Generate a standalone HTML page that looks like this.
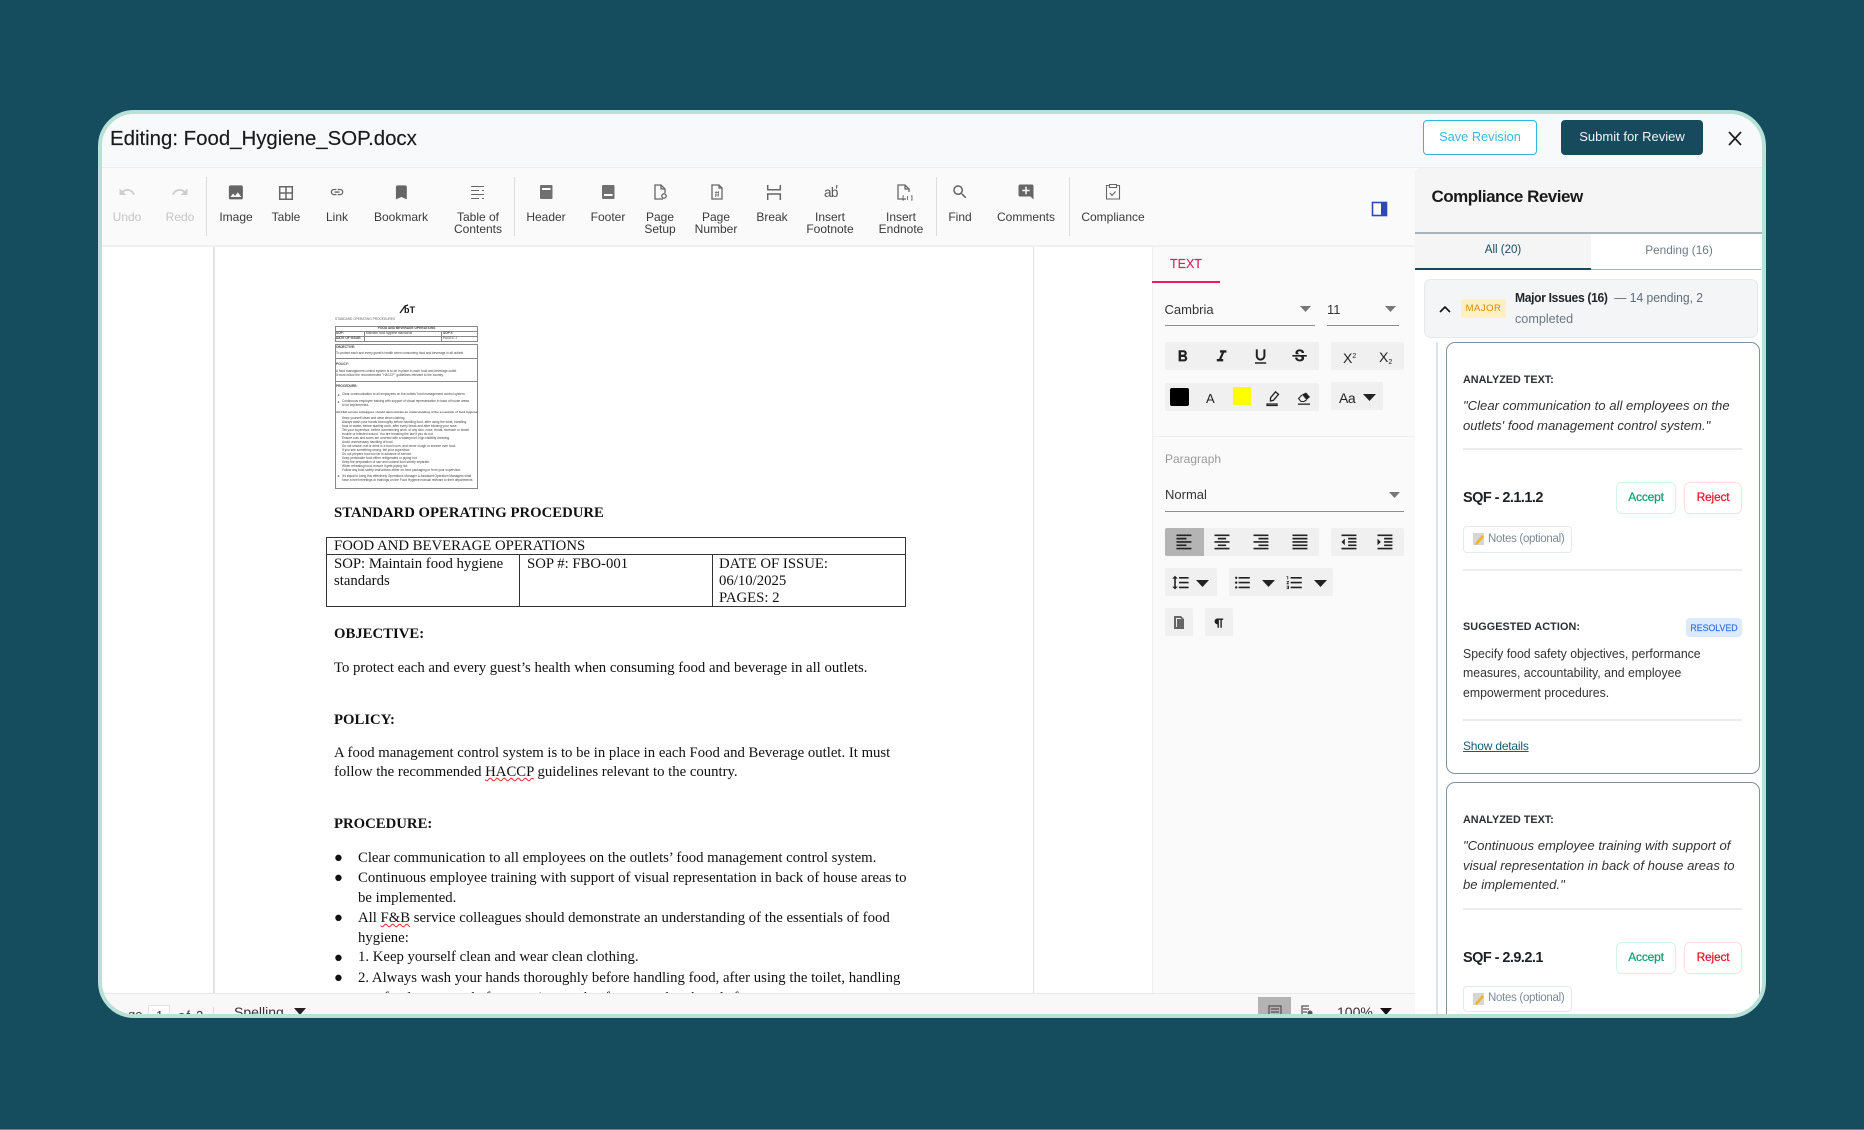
<!DOCTYPE html>
<html><head><meta charset="utf-8"><title>Editing</title>
<style>
html,body{margin:0;padding:0;width:1864px;height:1130px;overflow:hidden;background:#154d5f;font-family:"Liberation Sans",sans-serif}
#bot{position:absolute;left:0;top:1129px;width:1864px;height:1px;background:#5c8493}
#card{position:absolute;left:98px;top:110px;width:1668px;height:908px;box-sizing:border-box;border:4px solid #b7e0d6;border-radius:36px;overflow:hidden;background:#fff}
#w{position:absolute;left:-102px;top:-114px;width:1864px;height:1130px}
#w div{position:absolute}
.t{white-space:nowrap;line-height:20px;height:20px}
.c{transform:translateX(-50%);text-align:center}
.lb{font-size:12px;line-height:12px;color:#3a3a3a;text-align:center;white-space:nowrap;transform:translateX(-50%)}
.d{font-family:"Liberation Serif",serif;font-size:14.75px;color:#111;white-space:nowrap;line-height:20px;height:20px}
.b{font-weight:bold}
.s{background:#f0f0f0;border-radius:2px}
.n{transform:scaleX(.93);transform-origin:0 50%}
.it{font-style:italic;transform:scaleX(1.01);transform-origin:0 50%}
.m{font-size:13px;color:#333}
.ln{background:#ededed;height:2px}
.tt{font-size:3.2px;line-height:5px;height:5px;color:#444;white-space:nowrap;font-family:"Liberation Sans",sans-serif}
.bx{border:1px solid #888;box-sizing:border-box}
.wv{text-decoration:underline wavy #e2262c .8px;text-underline-offset:1px}
.ana{font-size:10.8px;font-weight:bold;color:#2a2f33}
.bt{font-size:12px;letter-spacing:-.2px;-webkit-text-stroke:.25px}
.sq{font-size:14.5px;font-weight:bold;color:#1c2024;letter-spacing:-.55px}
svg{position:absolute;left:0;top:0}
</style></head><body>
<div id="bot"></div>
<div id="card"><div id="w">

<!-- title bar -->
<div style="left:102px;top:114px;width:1660px;height:53px;background:#f8f9fa"></div>
<div style="left:102px;top:167px;width:1660px;height:1px;background:#eceef0"></div>
<div class="t" style="left:110px;top:129px;font-size:20.4px;color:#1a1a1a;-webkit-text-stroke:.15px #1a1a1a">Editing: Food_Hygiene_SOP.docx</div>
<div style="left:1423px;top:120px;width:114px;height:35px;box-sizing:border-box;border:1px solid #2fb6da;border-radius:4px;background:#fff"></div>
<div class="t c" style="left:1480px;top:127px;font-size:12.8px;color:#3cb8da">Save Revision</div>
<div style="left:1561px;top:120px;width:142px;height:35px;border-radius:4px;background:#174a5c"></div>
<div class="t c" style="left:1632px;top:127px;font-size:13px;color:#f0f4f5">Submit for Review</div>

<!-- toolbar -->
<div style="left:102px;top:168px;width:1313px;height:77px;background:#fafafa"></div>
<div style="left:102px;top:245px;width:1313px;height:2px;background:#f1f1f1"></div>
<div style="left:206px;top:177px;width:1px;height:59px;background:#dcdcdc"></div>
<div style="left:514px;top:177px;width:1px;height:59px;background:#dcdcdc"></div>
<div style="left:936px;top:177px;width:1px;height:59px;background:#dcdcdc"></div>
<div style="left:1069px;top:177px;width:1px;height:59px;background:#dcdcdc"></div>
<div class="lb" style="left:127px;top:211px;color:#c4c4c4">Undo</div>
<div class="lb" style="left:180px;top:211px;color:#c4c4c4">Redo</div>
<div class="lb" style="left:236px;top:211px">Image</div>
<div class="lb" style="left:286px;top:211px">Table</div>
<div class="lb" style="left:337px;top:211px">Link</div>
<div class="lb" style="left:401px;top:211px">Bookmark</div>
<div class="lb" style="left:478px;top:211px">Table of<br>Contents</div>
<div class="lb" style="left:546px;top:211px">Header</div>
<div class="lb" style="left:608px;top:211px">Footer</div>
<div class="lb" style="left:660px;top:211px">Page<br>Setup</div>
<div class="lb" style="left:716px;top:211px">Page<br>Number</div>
<div class="lb" style="left:772px;top:211px">Break</div>
<div class="lb" style="left:830px;top:211px">Insert<br>Footnote</div>
<div class="lb" style="left:901px;top:211px">Insert<br>Endnote</div>
<div class="lb" style="left:960px;top:211px">Find</div>
<div class="lb" style="left:1026px;top:211px">Comments</div>
<div class="lb" style="left:1113px;top:211px">Compliance</div>
<div class="t" style="left:824px;top:183px;font-size:13.5px;color:#555;letter-spacing:-.6px">ab</div>

<!-- document -->
<div style="left:213px;top:247px;width:2px;height:746px;background:#e2e2e2"></div>
<div style="left:1033px;top:247px;width:1px;height:746px;background:#e2e2e2"></div>

<!-- thumbnail -->
<div class="t b" style="left:404px;top:300px;font-size:9px;color:#111">bT</div>
<div class="tt" style="left:335px;top:317px;color:#666">STANDARD OPERATING PROCEDURES</div>
<div class="bx" style="left:335px;top:326px;width:143px;height:16px"></div>
<div style="left:335px;top:331px;width:143px;height:1px;background:#888"></div>
<div style="left:335px;top:336px;width:143px;height:1px;background:#888"></div>
<div style="left:364px;top:331px;width:1px;height:11px;background:#888"></div>
<div style="left:441px;top:331px;width:1px;height:11px;background:#888"></div>
<div class="tt" style="left:378px;top:326px;font-weight:bold">FOOD AND BEVERAGE OPERATIONS</div>
<div class="tt" style="left:336px;top:331px;font-weight:bold">SOP:</div>
<div class="tt" style="left:366px;top:331px">Maintain food hygiene standards</div>
<div class="tt" style="left:443px;top:331px;font-weight:bold">SOP #:</div>
<div class="tt" style="left:336px;top:336px;font-weight:bold">DATE OF ISSUE:</div>
<div class="tt" style="left:443px;top:336px">PAGES: 2</div>
<div class="bx" style="left:335px;top:344px;width:143px;height:15px"></div>
<div class="bx" style="left:335px;top:358px;width:143px;height:24px"></div>
<div class="bx" style="left:335px;top:381px;width:143px;height:108px"></div>
<div class="tt" style="left:336px;top:345px;font-weight:bold">OBJECTIVE:</div>
<div class="tt" style="left:336px;top:351px">To protect each and every guest's health when consuming food and beverage in all outlets</div>
<div class="tt" style="left:336px;top:362px;font-weight:bold">POLICY:</div>
<div class="tt" style="left:336px;top:369px">A food management control system is to be in place in each food and beverage outlet</div>
<div class="tt" style="left:336px;top:373px">It must follow the recommended "HACCP" guidelines relevant to the country.</div>
<div class="tt" style="left:336px;top:384px;font-weight:bold">PROCEDURE:</div>
<div class="tt" style="left:342px;top:392px">Clear communication to all employees on the outlets' food management control system.</div>
<div class="tt" style="left:342px;top:399px">Continuous employee training with support of visual representation in back of house areas</div>
<div class="tt" style="left:342px;top:403px">to be implemented.</div>
<div class="tt" style="left:336px;top:410px;font-size:3px;font-weight:bold;color:#555">All F&amp;B service colleagues should demonstrate an understanding of the essentials of food hygiene</div>
<div class="tt" style="left:342px;top:416px">Keep yourself clean and wear clean clothing.</div>
<div class="tt" style="left:342px;top:420px">Always wash your hands thoroughly before handling food, after using the toilet, handling</div>
<div class="tt" style="left:342px;top:424px">food or waste, before starting work, after every break and after blowing your nose.</div>
<div class="tt" style="left:342px;top:428px">Tell your supervisor, before commencing work, of any skin, nose, throat, stomach or bowel</div>
<div class="tt" style="left:342px;top:432px">trouble or infected wound. You are breaking the law if you do not.</div>
<div class="tt" style="left:342px;top:436px">Ensure cuts and sores are covered with a waterproof, high visibility dressing.</div>
<div class="tt" style="left:342px;top:440px">Avoid unnecessary handling of food.</div>
<div class="tt" style="left:342px;top:444px">Do not smoke, eat or drink in a food room, and never cough or sneeze over food.</div>
<div class="tt" style="left:342px;top:448px">If you see something wrong, tell your supervisor.</div>
<div class="tt" style="left:342px;top:452px">Do not prepare food too far in advance of service.</div>
<div class="tt" style="left:342px;top:456px">Keep perishable food either refrigerated or piping hot.</div>
<div class="tt" style="left:342px;top:460px">Keep the preparation of raw and cooked food strictly separate.</div>
<div class="tt" style="left:342px;top:464px">When reheating food, ensure it gets piping hot.</div>
<div class="tt" style="left:342px;top:468px">Follow any food safety instructions either on food packaging or from your supervisor.</div>
<div class="tt" style="left:342px;top:474px">It's equal to bring this effectively Operations Manager &amp; Assistant Operation Managers shall</div>
<div class="tt" style="left:342px;top:478px">have a brief meetings or trainings on the Food Hygiene manual relevant to their departments</div>

<div class="d b" style="left:334px;top:503px">STANDARD OPERATING PROCEDURE</div>
<div style="left:326px;top:537px;width:580px;height:70px;box-sizing:border-box;border:1px solid #333"></div>
<div style="left:326px;top:554px;width:580px;height:1px;background:#333"></div>
<div style="left:519px;top:554px;width:1px;height:52px;background:#333"></div>
<div style="left:712px;top:554px;width:1px;height:52px;background:#333"></div>
<div class="d" style="left:334px;top:536px">FOOD AND BEVERAGE OPERATIONS</div>
<div class="d" style="left:334px;top:554px">SOP: Maintain food hygiene</div>
<div class="d" style="left:334px;top:571px">standards</div>
<div class="d" style="left:527px;top:554px">SOP #: FBO-001</div>
<div class="d" style="left:719px;top:554px">DATE OF ISSUE:</div>
<div class="d" style="left:719px;top:571px">06/10/2025</div>
<div class="d" style="left:719px;top:588px">PAGES: 2</div>
<div class="d b" style="left:334px;top:624px">OBJECTIVE:</div>
<div class="d" style="left:334px;top:658px">To protect each and every guest’s health when consuming food and beverage in all outlets.</div>
<div class="d b" style="left:334px;top:710px">POLICY:</div>
<div class="d" style="left:334px;top:743px">A food management control system is to be in place in each Food and Beverage outlet. It must</div>
<div class="d" style="left:334px;top:762px">follow the recommended <span class="wv">HACCP</span> guidelines relevant to the country.</div>
<div class="d b" style="left:334px;top:814px">PROCEDURE:</div>
<div class="d" style="left:334px;top:848px">●</div>
<div class="d" style="left:358px;top:848px">Clear communication to all employees on the outlets’ food management control system.</div>
<div class="d" style="left:334px;top:868px">●</div>
<div class="d" style="left:358px;top:868px">Continuous employee training with support of visual representation in back of house areas to</div>
<div class="d" style="left:358px;top:888px">be implemented.</div>
<div class="d" style="left:334px;top:908px">●</div>
<div class="d" style="left:358px;top:908px">All <span class="wv">F&amp;B</span> service colleagues should demonstrate an understanding of the essentials of food</div>
<div class="d" style="left:358px;top:928px">hygiene:</div>
<div class="d" style="left:334px;top:948px">●</div>
<div class="d" style="left:358px;top:947px">1. Keep yourself clean and wear clean clothing.</div>
<div class="d" style="left:334px;top:968px">●</div>
<div class="d" style="left:358px;top:968px">2. Always wash your hands thoroughly before handling food, after using the toilet, handling</div>
<div class="d" style="left:358px;top:988px">raw food or waste, before starting work, after every break and after</div>

<!-- status bar -->
<div style="left:102px;top:993px;width:1313px;height:21px;background:#f8f8f8;border-top:1px solid #e8e8e8;box-sizing:border-box"></div>
<div class="t" style="left:128px;top:1005px;font-size:13px;color:#333">ge</div>
<div style="left:148px;top:1005px;width:22px;height:20px;background:#fff;border:1px solid #e4e4e4;box-sizing:border-box"></div>
<div class="t" style="left:156px;top:1006px;font-size:13px;color:#333">1</div>
<div class="t" style="left:178px;top:1006px;font-size:13px;color:#333;letter-spacing:1.2px">of 2</div>
<div style="left:213px;top:1007px;width:1px;height:7px;background:#ddd"></div>
<div class="t" style="left:234px;top:1002px;font-size:14px;color:#333">Spelling</div>
<div style="left:1258px;top:997px;width:33px;height:17px;background:#b3b3b3"></div>
<div class="t" style="left:1337px;top:1002px;font-size:14px;color:#333">100%</div>

<!-- side format panel -->
<div style="left:1152px;top:247px;width:263px;height:746px;background:#fafafa;border-left:1px solid #f0f0f0;box-sizing:border-box"></div>
<div class="t" style="left:1170px;top:254px;font-size:12.5px;color:#ec1c5a;-webkit-text-stroke:.15px #ec1c5a">TEXT</div>
<div style="left:1152px;top:281px;width:68px;height:2px;background:#ec1c5a"></div>
<div class="t" style="left:1164.500px;top:300px;font-size:13px;color:#333">Cambria</div>
<div style="left:1165px;top:325px;width:150px;height:1px;background:#8f8f8f"></div>
<div class="t" style="left:1327px;top:300px;font-size:13px;color:#333">11</div>
<div style="left:1327px;top:325px;width:72px;height:1px;background:#8f8f8f"></div>
<div class="s" style="left:1165px;top:342px;width:154px;height:28px"></div>
<div class="s" style="left:1331px;top:342px;width:73px;height:28px"></div>
<div class="t" style="left:1343px;top:347px;font-size:14px;color:#222">X<span style="font-size:7px;vertical-align:5px">2</span></div>
<div class="t" style="left:1379px;top:347px;font-size:14px;color:#222">X<span style="font-size:7px;vertical-align:-2px">2</span></div>
<div class="s" style="left:1165px;top:383px;width:154px;height:28px"></div>
<div style="left:1170px;top:388px;width:19px;height:18px;background:#000;border-radius:2px"></div>
<div style="left:1233px;top:387px;width:18px;height:18px;background:#ff0"></div>
<div class="s" style="left:1331px;top:382px;width:52px;height:28px"></div>
<div class="t" style="left:1206px;top:389px;font-size:13px;color:#222">A</div>
<div class="t" style="left:1339px;top:388px;font-size:14px;color:#222;letter-spacing:-.5px">Aa</div>
<div style="left:1152px;top:436px;width:263px;height:1px;background:#eee"></div>
<div class="t" style="left:1165px;top:449px;font-size:12px;color:#9a9a9a">Paragraph</div>
<div class="t" style="left:1165px;top:485px;font-size:13px;color:#333">Normal</div>
<div style="left:1165px;top:511px;width:239px;height:1px;background:#8f8f8f"></div>
<div class="s" style="left:1165px;top:528px;width:154px;height:28px"></div>
<div style="left:1165px;top:528px;width:39px;height:28px;background:#b4b4b4;border-radius:2px 0 0 2px"></div>
<div class="s" style="left:1331px;top:528px;width:73px;height:28px"></div>
<div class="s" style="left:1165px;top:568px;width:52px;height:28px"></div>
<div class="s" style="left:1229px;top:568px;width:104px;height:28px"></div>
<div class="s" style="left:1165px;top:608px;width:28px;height:28px"></div>
<div class="s" style="left:1205px;top:608px;width:28px;height:28px"></div>

<!-- compliance panel -->
<div style="left:1415px;top:168px;width:347px;height:846px;background:#fff"></div>
<div style="left:1415px;top:168px;width:347px;height:64px;background:#f5f5f5;border-radius:4px 0 0 0"></div>
<div style="left:1415px;top:232px;width:347px;height:2px;background:#a9b3ba"></div>
<div class="t" style="left:1431.500px;top:187px;font-size:17px;font-weight:bold;color:#1a1a1a;letter-spacing:-.5px">Compliance Review</div>
<div style="left:1415px;top:234px;width:176px;height:36px;background:#f5f5f5"></div>
<div style="left:1415px;top:268px;width:176px;height:2px;background:#174a5c"></div>
<div style="left:1591px;top:269px;width:170px;height:1px;background:#a9b3ba"></div>
<div class="t c" style="left:1503px;top:240px;font-size:11.5px;color:#1d4a5c">All (20)</div>
<div class="t c" style="left:1679px;top:240px;font-size:11.800px;color:#6e7c87">Pending (16)</div>

<div style="left:1424px;top:279px;width:334px;height:59px;box-sizing:border-box;background:#f4f5f6;border:1px solid #e6e8eb;border-radius:7px"></div>
<div style="left:1461px;top:299px;width:45px;height:19px;background:#fdf0c4;border-radius:3px"></div>
<div class="t c" style="left:1483.500px;top:299px;font-size:9.5px;letter-spacing:.5px;color:#d98a0a">MAJOR</div>
<div class="t n" style="left:1515px;top:288px;font-size:13px;color:#5f6c78"><b style="color:#20252a;letter-spacing:-.35px">Major Issues (16)</b>&nbsp; — 14 pending, 2</div>
<div class="t n" style="left:1515px;top:309px;font-size:13px;color:#6b7884;transform:scaleX(.97)">completed</div>
<div style="left:1436px;top:342px;width:2px;height:672px;background:#dfe3e8"></div>

<!-- card 1 -->
<div style="left:1446px;top:342px;width:314px;height:432px;box-sizing:border-box;border:1px solid #7f90a0;border-radius:9px;background:#fff"></div>
<div class="t ana" style="left:1463px;top:370px">ANALYZED TEXT:</div>
<div class="t it m" style="left:1463px;top:396px">"Clear communication to all employees on the</div>
<div class="t it m" style="left:1463px;top:416px">outlets' food management control system."</div>
<div class="ln" style="left:1463px;top:448px;width:279px"></div>
<div class="t sq" style="left:1463px;top:488px">SQF - 2.1.1.2</div>
<div style="left:1616px;top:482px;width:60px;height:32px;box-sizing:border-box;border:1px solid #d3f4e5;border-radius:6px;background:#fff"></div>
<div class="t c bt" style="left:1646px;top:487px;color:#12a070">Accept</div>
<div style="left:1684px;top:482px;width:58px;height:32px;box-sizing:border-box;border:1px solid #fde0e0;border-radius:6px;background:#fff"></div>
<div class="t c bt" style="left:1713px;top:487px;color:#e8152d">Reject</div>
<div style="left:1463px;top:526px;width:109px;height:27px;box-sizing:border-box;border:1px solid #e5e8ec;border-radius:4px;background:#fff"></div>
<div class="t" style="left:1488px;top:529px;font-size:11.5px;color:#7d8a96;letter-spacing:-.3px">Notes (optional)</div>
<div class="ln" style="left:1463px;top:569px;width:279px"></div>
<div class="t ana" style="left:1463px;top:617px;letter-spacing:.1px">SUGGESTED ACTION:</div>
<div style="left:1686px;top:618px;width:56px;height:19px;background:#dbeafe;border-radius:4px"></div>
<div class="t c" style="left:1714px;top:618px;font-size:8.800px;color:#3b6fe8;-webkit-text-stroke:.2px #3b6fe8">RESOLVED</div>
<div class="t m" style="left:1463px;top:644px;transform:scaleX(.945);transform-origin:0 50%">Specify food safety objectives, performance</div>
<div class="t m" style="left:1463px;top:663px;transform:scaleX(.945);transform-origin:0 50%">measures, accountability, and employee</div>
<div class="t m" style="left:1463px;top:683px;transform:scaleX(.945);transform-origin:0 50%">empowerment procedures.</div>
<div class="ln" style="left:1463px;top:719px;width:279px"></div>
<div class="t" style="left:1463px;top:736px;font-size:12px;color:#1d5a70;text-decoration:underline;letter-spacing:-.2px">Show details</div>

<!-- card 2 -->
<div style="left:1446px;top:782px;width:314px;height:300px;box-sizing:border-box;border:1px solid #7f90a0;border-radius:9px;background:#fff"></div>
<div class="t ana" style="left:1463px;top:810px">ANALYZED TEXT:</div>
<div class="t it m" style="left:1463px;top:836px">"Continuous employee training with support of</div>
<div class="t it m" style="left:1463px;top:856px">visual representation in back of house areas to</div>
<div class="t it m" style="left:1463px;top:875px">be implemented."</div>
<div class="ln" style="left:1463px;top:908px;width:279px"></div>
<div class="t sq" style="left:1463px;top:948px">SQF - 2.9.2.1</div>
<div style="left:1616px;top:942px;width:60px;height:32px;box-sizing:border-box;border:1px solid #d3f4e5;border-radius:6px;background:#fff"></div>
<div class="t c bt" style="left:1646px;top:947px;color:#12a070">Accept</div>
<div style="left:1684px;top:942px;width:58px;height:32px;box-sizing:border-box;border:1px solid #fde0e0;border-radius:6px;background:#fff"></div>
<div class="t c bt" style="left:1713px;top:947px;color:#e8152d">Reject</div>
<div style="left:1463px;top:986px;width:109px;height:26px;box-sizing:border-box;border:1px solid #e5e8ec;border-radius:4px;background:#fff"></div>
<div class="t" style="left:1488px;top:988px;font-size:11.5px;color:#7d8a96;letter-spacing:-.3px">Notes (optional)</div>

<!-- icons -->
<svg width="1864" height="1130" viewBox="0 0 1864 1130">
<path d="M1729 132l12 13M1741 132l-12 13" stroke="#1c2024" stroke-width="1.700" fill="none"/>
<g fill="#cfcfcf">
<path transform="translate(118,183) scale(.75)" d="M12.5 8c-2.65 0-5.05.99-6.9 2.6L2 7v9h9l-3.62-3.62c1.39-1.16 3.16-1.88 5.12-1.88 3.54 0 6.55 2.31 7.6 5.5l2.37-.78C21.08 11.03 17.15 8 12.5 8z"/>
<path transform="translate(171,183) scale(.75)" d="M18.4 10.6C16.55 8.99 14.15 8 11.5 8c-4.65 0-8.58 3.03-9.96 7.22L3.9 16c1.05-3.19 4.05-5.5 7.6-5.5 1.95 0 3.73.72 5.12 1.88L13 16h9V7l-3.6 3.6z"/>
</g>
<g fill="#666">
<path transform="translate(226.500,183) scale(.78)" d="M21 19V5c0-1.1-.9-2-2-2H5c-1.1 0-2 .9-2 2v14c0 1.1.9 2 2 2h14c1.1 0 2-.9 2-2zM8.500 13.500l2.500 3.010L14.500 12l4.500 6H5l3.500-4.500z"/>
<path transform="translate(329.500,184.500) scale(.63)" d="M3.900 12c0-1.710 1.390-3.100 3.100-3.100h4V7H7c-2.760 0-5 2.240-5 5s2.240 5 5 5h4v-1.900H7c-1.710 0-3.100-1.390-3.100-3.100zM8 13h8v-2H8v2zm9-6h-4v1.900h4c1.710 0 3.100 1.390 3.100 3.100s-1.390 3.100-3.100 3.100h-4V17h4c2.760 0 5-2.240 5-5s-2.240-5-5-5z"/>
<path transform="translate(392,183) scale(.78)" d="M17 3H7c-1.100 0-1.990.9-1.990 2L5 21l7-3 7 3V5c0-1.100-.9-2-2-2z"/>
<rect x="540" y="185" width="12.500" height="14" rx="1" fill="#707070"/>
<rect x="602" y="185" width="12.500" height="14" rx="1" fill="#707070"/>
<path transform="translate(951,183) scale(.75)" d="M15.500 14h-.79l-.28-.27C15.410 12.590 16 11.110 16 9.500 16 5.910 13.090 3 9.500 3S3 5.910 3 9.500 5.910 16 9.500 16c1.610 0 3.090-.59 4.230-1.570l.27.28v.79l5 4.990L20.490 19l-4.990-5zm-6 0C7.010 14 5 11.990 5 9.500S7.010 5 9.500 5 14 7.010 14 9.500 11.990 14 9.500 14z"/>
<path transform="translate(1017,183) scale(.75)" d="M20 2H4c-1.100 0-2 .9-2 2v12c0 1.100.9 2 2 2h14l4 4V4c0-1.100-.9-2-2-2zm-3 9h-4v4h-2v-4H7V9h4V5h2v4h4v2z"/>
</g>
<rect x="542" y="188" width="8.500" height="2" fill="#fff"/>
<rect x="604" y="194" width="8.500" height="2" fill="#fff"/>
<g fill="none" stroke="#666" stroke-width="1.300">
<path d="M279.700 186.700h12.600v12.600h-12.600zM286 186.700v12.600M279.700 193h12.600" stroke-width="1.500"/>
<path d="M471 186.500h13M471 190.500h8M482 190.500h2M471 194.500h13M471 198.500h8M482 198.500h2" stroke-width="1.100"/>
<path d="M663 199h-8v-14h6l4 4v4M661 185v4h4"/>
<circle cx="664" cy="196" r="2.200"/>
<path d="M712 185h7l3 3v11h-10zM719 185v3h3"/>
<path d="M715 192.500h4M715 195h4M716.200 191l-.5 6M718.500 191l-.5 6" stroke-width=".7"/>
<path d="M767.700 185v4.700h12.600v-4.700M767.700 200v-6h12.600v6" stroke-width="1.500"/>
<path d="M837 185l-.6 3.500" stroke-width="1.200"/>
<path d="M906 199h-8v-14h7l4 4v3M905 185v4h4"/>
<path d="M904 196h-1v4h1M911 196h1v4h-1" stroke-width=".9"/>
<path d="M907.500 196v4" stroke-width=".9"/>
<path d="M1109 185.500h-2.500v13.500h13v-13.500h-2.500" stroke-width="1.100"/>
<path d="M1109.500 184.500h7v3h-7zM1110 193l2 2.500 3.500-4" stroke-width="1.100"/>
</g>
<rect x="1372.500" y="202.500" width="14" height="13" fill="#fff" stroke="#2e48b4" stroke-width="1.600"/>
<rect x="1381" y="202" width="6" height="14" fill="#2e48b4"/>
<path d="M1269 1006h12v10h-12zM1271 1009h8M1271 1012h8" fill="none" stroke="#555" stroke-width="1.300"/>
<path d="M1309 1006h-7v12M1303 1009h6M1303 1012h4" fill="none" stroke="#555" stroke-width="1.300"/>
<circle cx="1310" cy="1013" r="2.500" fill="#555"/>
<path d="M294 1008h12l-6 7z" fill="#222"/>
<path d="M1380 1008h12l-6 7z" fill="#111"/>
<g fill="#777">
<path d="M1300 306h11l-5.500 6z"/><path d="M1385 306h11l-5.500 6z"/><path d="M1389 492h11l-5.500 6z"/>
</g>
<g fill="#222">
<path transform="translate(1173,347) scale(.8)" d="M15.600 10.790c.97-.67 1.650-1.770 1.650-2.790 0-2.260-1.750-4-4-4H7v14h7.040c2.090 0 3.710-1.700 3.710-3.790 0-1.520-.86-2.820-2.150-3.420zM10 6.500h3c.83 0 1.500.67 1.500 1.500s-.67 1.500-1.500 1.500h-3v-3zm3.500 9H10v-3h3.500c.83 0 1.500.67 1.500 1.500s-.67 1.500-1.500 1.500z"/>
<path transform="translate(1212,347) scale(.8)" d="M10 4v3h2.210l-3.420 8H6v3h8v-3h-2.210l3.420-8H18V4z"/>
<path transform="translate(1251,347) scale(.8)" d="M12 17c3.310 0 6-2.690 6-6V3h-2.500v8c0 1.930-1.570 3.500-3.500 3.500S8.500 12.930 8.500 11V3H6v8c0 3.310 2.690 6 6 6zm-7 2v2h14v-2H5z"/>
<path transform="translate(1290,347) scale(.8)" d="M6.850 7.080C6.850 4.370 9.450 3 12.240 3c1.640 0 3 .49 3.900 1.280.77.65 1.460 1.730 1.460 3.240h-3.010c0-.31-.05-.59-.15-.85-.29-.86-1.200-1.280-2.250-1.280-1.860 0-2.340 1.020-2.340 1.700 0 .48.25.88.74 1.210.38.25.77.48 1.410.7H7.390c-.21-.34-.54-.89-.54-1.920zM21 12v-2H3v2h9.620c1.150.45 1.960.75 1.960 1.970 0 1-.81 1.670-2.280 1.670-1.540 0-2.930-.54-2.930-2.510H6.400c0 .55.08 1.130.24 1.580.81 2.290 3.290 3.300 5.670 3.300 2.270 0 5.300-.89 5.300-4.050 0-.3-.03-1.160-.52-1.960H21z"/>
<path d="M1270.500 401v-3.200l5-6 3 2.500-5 6zM1267 404h10v1.500h-10z" fill="none" stroke="#222" stroke-width="1.300"/>
<path d="M1302 394.500l4 -2 4 4.500-3.500 3z"/>
<path d="M1302 395l-3.500 3.500 2.500 3h3l2.500-1.500" fill="none" stroke="#222" stroke-width="1.100"/>
<path d="M1298 403.500h12v1.300h-12z"/>
<path d="M1363 394h13l-6.500 7zM1196 580h13l-6.500 7zM1262 580h13l-6.500 7zM1314 580h13l-6.500 7z"/>
<g transform="translate(1174,532) scale(.83)"><path d="M15 15H3v2h12v-2zm0-8H3v2h12V7zM3 13h18v-2H3v2zm0 8h18v-2H3v2zM3 3v2h18V3H3z"/></g>
<g transform="translate(1212,532) scale(.83)"><path d="M7 15v2h10v-2H7zm-4 6h18v-2H3v2zm0-8h18v-2H3v2zm4-6v2h10V7H7zM3 3v2h18V3H3z"/></g>
<g transform="translate(1251,532) scale(.83)"><path d="M3 21h18v-2H3v2zm6-4h12v-2H9v2zm-6-4h18v-2H3v2zm6-4h12V7H9v2zM3 3v2h18V3H3z"/></g>
<g transform="translate(1290,532) scale(.83)"><path d="M3 21h18v-2H3v2zm0-4h18v-2H3v2zm0-4h18v-2H3v2zm0-4h18V7H3v2zm0-6v2h18V3H3z"/></g>
<g transform="translate(1339,532) scale(.83)"><path d="M11 17h10v-2H11v2zm-8-5l4 4V8l-4 4zm0 9h18v-2H3v2zM3 3v2h18V3H3zm8 6h10V7H11v2zm0 4h10v-2H11v2z"/></g>
<g transform="translate(1375,532) scale(.83)"><path d="M3 21h18v-2H3v2zM3 8v8l4-4-4-4zm8 9h10v-2H11v2zM3 3v2h18V3H3zm8 6h10V7H11v2zm0 4h10v-2H11v2z"/></g>
<g transform="translate(1171,573) scale(.8)"><path d="M6 7h2.500L5 3.500 1.500 7H4v10H1.500L5 20.500 8.500 17H6V7zm4-2v2h12V5H10zm0 14h12v-2H10v2zm0-6h12v-2H10v2z"/></g>
<g transform="translate(1233,573) scale(.8)"><path d="M4 10.500c-.83 0-1.500.67-1.500 1.500s.67 1.500 1.500 1.500 1.500-.67 1.500-1.500-.67-1.500-1.500-1.500zm0-6c-.83 0-1.500.67-1.500 1.500S3.170 7.500 4 7.500 5.500 6.830 5.500 6 4.830 4.500 4 4.500zm0 12c-.83 0-1.500.68-1.500 1.500s.68 1.500 1.500 1.500 1.500-.68 1.500-1.500-.67-1.500-1.500-1.500zM7 19h14v-2H7v2zm0-6h14v-2H7v2zm0-8v2h14V5H7z"/></g>
<g transform="translate(1285,573) scale(.8)"><path d="M2 17h2v.5H3v1h1v.5H2v1h3v-4H2v1zm1-9h1V4H2v1h1v3zm-1 3h1.800L2 13.100v.9h3v-1H3.200L5 10.900V10H2v1zm5-6v2h14V5H7zm0 14h14v-2H7v2zm0-6h14v-2H7v2z"/></g>
<path d="M1174 616h7l3 3v10h-10z" fill="#666"/><path d="M1176 618h5v9h-5z" fill="#eee"/><path d="M1177 619h5l1.500 1.500v7.500h-6.500z" fill="#666"/>
<path transform="translate(1211,617) scale(.72)" d="M9 10v5h2V4h2v11h2V4h2V2H9C6.790 2 5 3.790 5 6s1.790 4 4 4z"/>
<path d="M1440 312l5-5 5 5" fill="none" stroke="#111" stroke-width="1.600"/>
</g>
<g>
<rect x="1473" y="533" width="11" height="12" fill="#d6d6d6"/><path d="M1476 542l6-7 2 2-6 7-3 1z" fill="#f0b429"/>
<rect x="1473" y="993" width="11" height="12" fill="#d6d6d6"/><path d="M1476 1002l6-7 2 2-6 7-3 1z" fill="#f0b429"/>
</g>
<path d="M400 313l5-7 3-1" fill="none" stroke="#111" stroke-width="1.200"/>
<g fill="#555">
<circle cx="338.500" cy="395" r=".8"/><circle cx="338.500" cy="402" r=".8"/><circle cx="338.500" cy="476" r=".8"/>
</g>
</svg>

</div></div>
</body></html>
